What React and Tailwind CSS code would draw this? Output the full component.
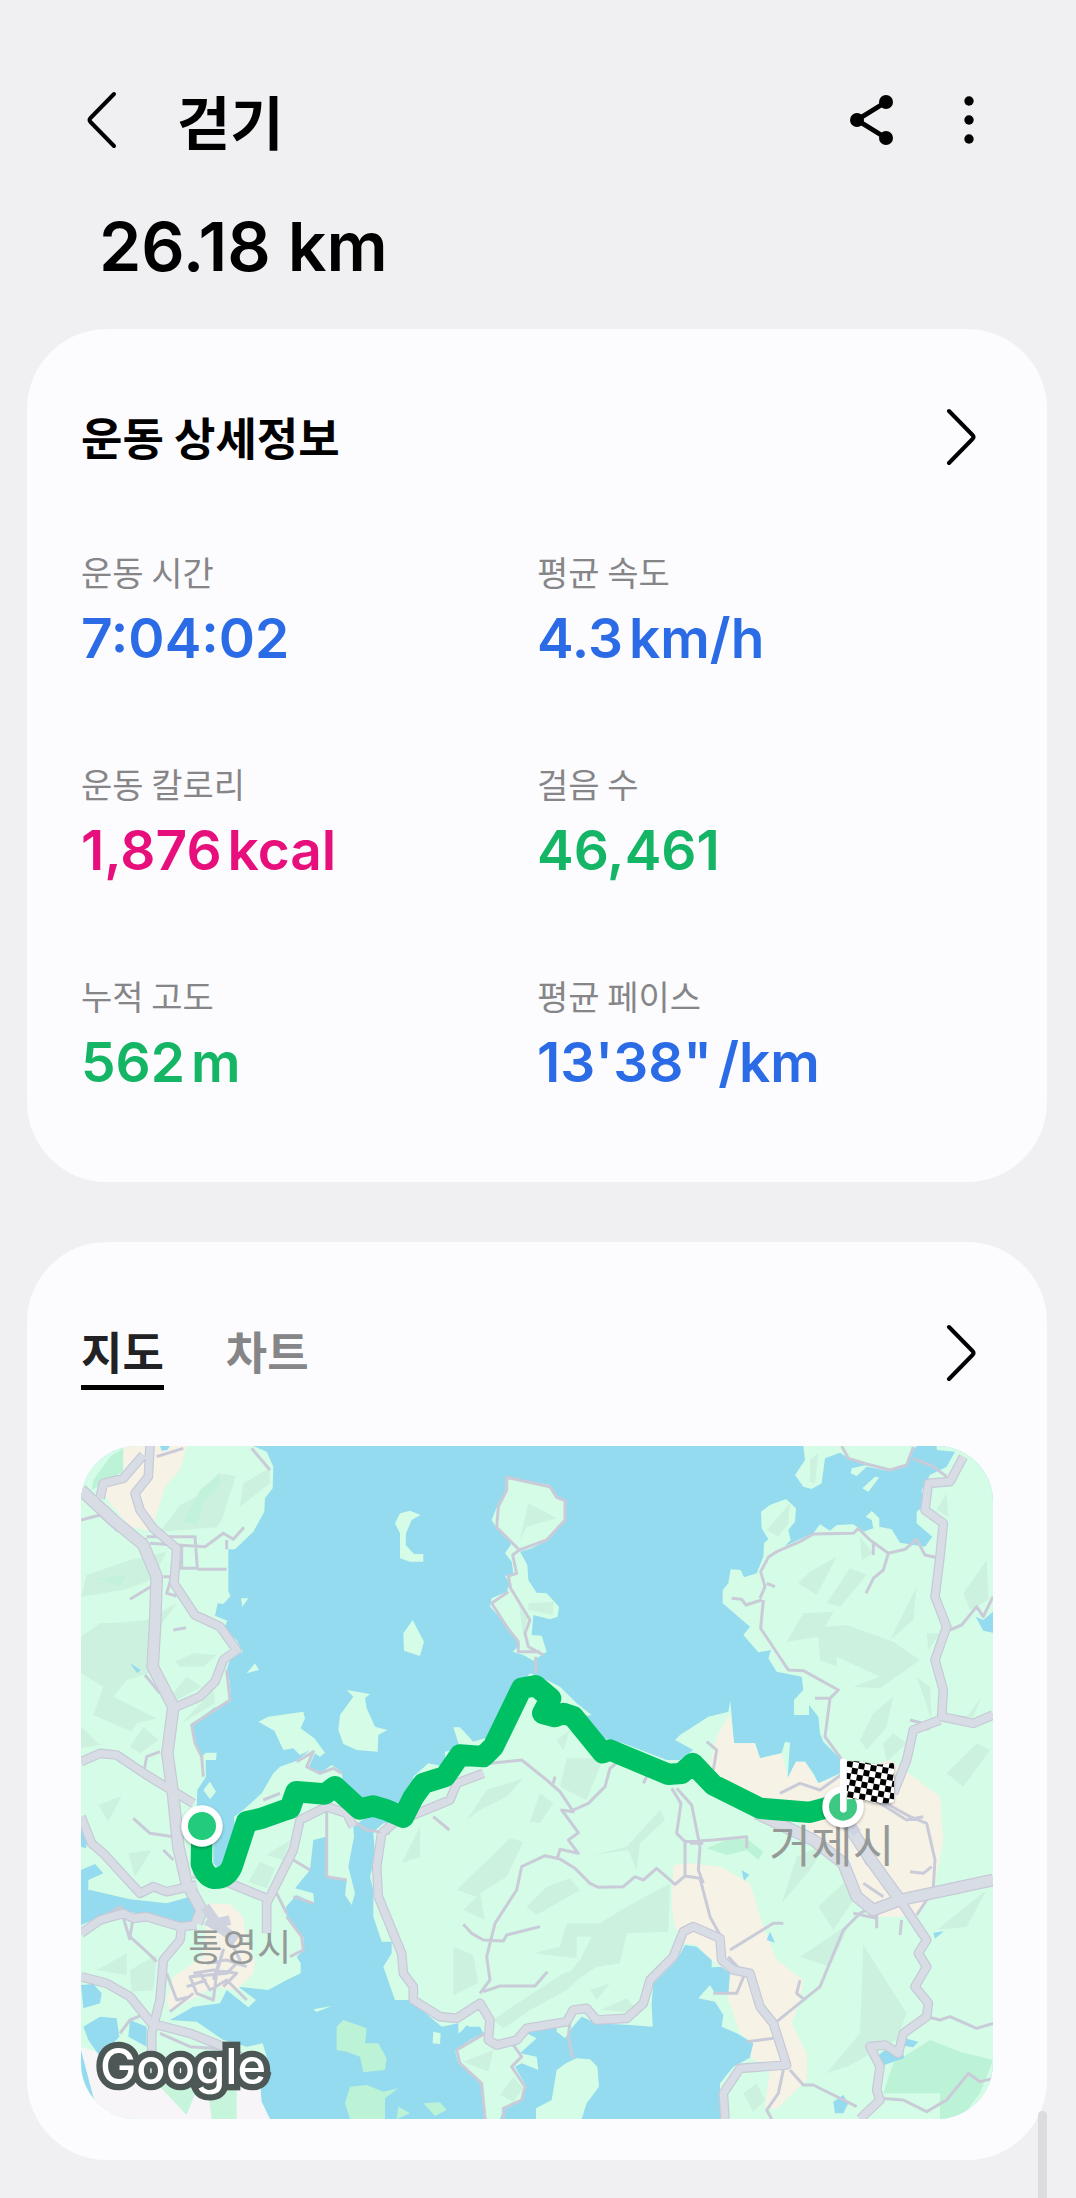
// src/App.jsx
import React, { useState } from 'react';

const STATS = [
    { label: '운동 시간', value: '7:04:02', color: 'text-[#2b6be6]' },
    { label: '평균 속도', value: '4.3', unit: 'km/h', color: 'text-[#2b6be6]' },
    { label: '운동 칼로리', value: '1,876', unit: 'kcal', color: 'text-[#e60f7c]' },
    { label: '걸음 수', value: '46,461', color: 'text-[#15b566]' },
    { label: '누적 고도', value: '562', unit: 'm', color: 'text-[#15b566]' },
    { label: '평균 페이스', value: '13\'38"', unit: '/km', color: 'text-[#2b6be6]' },
];

// Map geometry, three units to a pixel at full width
const LAND = [
    // west mainland
    'M3 18H520L560 35 580 80 578 145 555 175 553 215 520 275 465 328H445V455L452 468 430 492 413 490 405 527 442 542 430 570 470 600 488 635 450 660 440 690 450 730 452 785 400 805 335 855 345 910 365 950 377 938H410L408 960H377L378 1010 352 1050 350 1110 400 1150V1270L415 1285 440 1260 465 1170 462 1130 490 1110 545 1060 580 1000 600 980 650 962 690 930 705 940 685 985 720 1000 755 975 785 995 790 1040 830 1100 860 1130 820 1160 822 1190 805 1280 825 1360 815 1395 795 1365 800 1320 740 1310 738 1190 700 1200 690 1290 645 1345 700 1360 702 1390 650 1365 618 1400 620 1430 670 1490 672 1530 650 1550 662 1570V1600L620 1620 565 1650 475 1640 528 1680 505 1702 440 1650 420 1690 340 1700 270 1740 350 1745 430 1800 500 1820 548 1810 560 1850 540 1930 545 2037H3Z',
    // Geoje island, peninsulas and east coast
    'M1045 970L1095 980 1095 935 1140 925 1120 862 1140 862 1180 905 1230 890 1300 760 1350 700 1400 720 1440 740 1490 790 1535 825 1500 830 1570 895 1630 910 1760 960 1800 960 1840 930 1785 900 1800 885 1885 830 1945 815 1951 782 1962 910H2025L2040 955 2105 940 2115 905 2130 908 2123 1015 2148 965 2175 965 2200 1000 2215 1030 2280 1000 2290 965 2230 905 2220 880 2215 830 2187 795V825H2142V780L2170 750 2165 710 2090 695 2065 655 2073 630 2035 637 1990 585 2010 560 1928 490V450L1945 430 1952 388 1982 390 1992 412 2030 400 2050 350 2052 310 2065 298 2045 265 2043 215 2070 195 2118 177 2148 205 2145 245 2125 270 2132 300 2115 318 2200 280 2220 253 2250 272 2270 255 2320 253 2350 275 2380 265 2375 240 2357 230 2375 213 2398 235V260L2435 268 2460 308 2535 320 2557 290 2510 250V215L2530 200 2525 150 2550 105 2600 80 2625 35 2570 30V18H2739V2037H1920V1930L1960 1880 2015 1850 2020 1810 1970 1780 1925 1760 1930 1725 1905 1685 1855 1675 1890 1635 1905 1660 1945 1660 1952 1600 1930 1580 1895 1582V1560L1850 1520 1815 1515 1790 1560 1720 1630 1715 1690 1718 1760 1650 1755 1550 1750 1505 1730 1475 1765 1455 1795 1430 1775V1760L1370 1765 1340 1780 1370 1795 1320 1840 1370 1850 1375 1890 1325 1870 1305 1880 1337 1935 1325 1980 1270 2010 1260 2037H1220L1205 1930 1135 1870 1125 1830 1170 1800 1210 1780 1200 1760 1170 1760 1135 1780V1750L1085 1760 990 1680H945L910 1580 935 1540V1505H905L880 1430V1350L870 1310 885 1250 880 1175 910 1150 960 1150 1000 1080 1000 1010Z',
    // north headlands
    'M2170 18L2175 60 2145 105 2170 140 2195 147 2225 130 2235 55 2280 38 2305 55 2360 75 2315 85 2312 100 2330 108 2360 80 2430 94 2480 78 2500 30 2510 18Z',
    'M2347 145L2385 110 2398 112 2365 156Z',
    // islets
    'M535 845L565 830 670 815 675 835 662 865 703 895 735 938 720 950 690 930 660 945 640 925 610 930 583 872Z',
    'M800 750L870 762 855 775 860 805 885 860 922 870 895 885 893 935 830 930 790 912 775 870 780 825 820 770Z',
    'M483 475H505L487 500ZM500 700L525 670 537 690ZM370 1050L390 1025 408 1055 390 1078Z',
    'M945 250L960 220 990 212 1022 225 995 240 978 280 977 315 1002 342H1030V365H990L960 355V280Z',
    'M970 580L998 540 1032 605 1020 648 972 632Z',
    'M1280 112L1410 135 1430 170 1455 178V240L1405 300 1355 325 1320 335 1342 375 1345 420 1370 458 1400 460 1437 500 1433 530 1410 538 1360 525 1355 585 1385 587 1400 635 1360 662 1330 645 1298 635 1313 620 1310 600 1275 550 1230 500 1235 475 1280 455 1290 430 1275 408 1300 400 1295 365 1275 340 1295 310 1250 265 1235 240 1255 190 1275 160Z',
    'M1490 1855L1530 1858 1552 1880 1557 1940 1520 1990 1505 2037H1368V2005L1415 1980 1430 1890 1460 1868Z',
    'M1060 1775L1082 1780 1080 1812 1058 1810Z',
    'M700 1708L755 1698 710 1716Z',
];

const GROVES = [
    'M770 1760L790 1740 860 1765 855 1810 895 1810 920 1855 915 1890 850 1897 840 1850 800 1835 770 1830Z',
    'M810 1940L860 1935 910 1955 955 1945 915 1975V2037H810L795 1990Z',
    'M1030 1990L1080 1987 1100 2010 1065 2028ZM955 2000L990 2020 950 2037Z',
    'M35 150L40 120 90 50 130 25V95L70 130Z',
    'M2410 1960L2440 1870 2550 1800 2640 1835 2739 1860 2700 1960 2640 2037H2580V1960Z',
    'M1880 1225L1950 1195 2005 1200 2050 1235 2035 1260 2000 1230 1940 1245Z',
    'M370 1930L470 1960 465 2037H395Z',
];

const HILLS = [
    'M240 275L300 195 350 170 415 100 468 108 425 240 410 262Z',
    'M490 130L568 85 570 130 480 200Z',
    'M3 470L20 405 150 360 260 335 215 420 130 450Z',
    'M3 590L60 550 110 548 200 540 290 490 250 545 210 600 205 700 140 720 100 770 230 835 170 850 155 875 40 825 70 740 3 700Z',
    'M285 665L340 640 410 645 370 680 300 680ZM280 760L320 710 365 740 290 780ZM305 850L400 750 405 790Z',
    'M150 920L190 860 235 900 180 940ZM3 860L60 915 3 925Z',
    'M55 1095L125 1068 85 1145ZM145 1240L215 1230 165 1310ZM560 1245L630 1200 610 1260Z',
    'M540 1265L585 1285 560 1345 505 1325ZM50 1590L140 1540V1605ZM150 1590L230 1545 220 1650 155 1655Z',
    'M1345 190L1430 235 1340 260 1320 300ZM1345 490L1420 485V525L1345 510ZM1315 480L1345 520 1330 590Z',
    'M1430 900L1470 870 1450 930ZM1460 955H1570L1520 1080 1440 1040Z',
    'M1160 1140L1220 1050 1330 1015 1280 1070 1200 1110ZM1380 1060L1420 1090 1380 1150 1350 1145Z',
    'M965 1270L1020 1160V1250ZM1130 1350L1290 1195 1330 1205 1280 1310 1200 1360 1215 1440 1150 1410 1190 1370Z',
    'M1120 1520L1180 1545 1195 1630 1120 1665ZM1340 1400L1400 1340 1470 1315 1500 1350 1370 1425Z',
    'M1540 1245L1640 1220 1740 1110 1755 1140 1680 1210 1670 1290 1645 1230Z',
    'M1360 1540L1440 1520 1460 1450 1560 1450 1640 1400 1770 1330 1765 1475 1640 1480 1620 1570 1550 1580 1400 1680 1500 1560 1535 1490 1490 1490 1490 1555Z',
    'M1240 1740L1290 1705 1450 1600 1540 1575 1460 1650 1350 1710 1270 1765ZM1530 1650L1590 1630 1550 1680ZM1560 1710L1640 1675 1680 1720Z',
    'M1150 1865L1240 1830 1225 1895ZM1260 1965L1300 1910 1330 1945 1300 1985Z',
    'M2120 605L2170 520 2260 515 2235 560 2300 555 2440 605 2520 660 2400 745 2320 740 2400 710 2270 650V680L2220 660 2215 590Z',
    'M2155 430L2190 395 2270 350 2210 465ZM2240 490L2310 385 2360 405 2280 500ZM2430 600L2510 440 2500 540Z',
    'M2340 290L2380 340 2345 360ZM2190 60L2215 40 2205 130 2190 125ZM2060 270L2130 190 2125 250 2095 290Z',
    'M2340 900L2380 820 2440 770 2420 860 2360 930ZM2410 910L2440 880 2480 910 2420 965ZM2510 710L2550 740 2555 840Z',
    'M2650 460L2720 360 2725 480 2670 510ZM2570 210L2600 160 2605 230ZM2540 580L2580 580 2545 630Z',
    'M2600 1000L2690 910 2730 930 2650 1040ZM2660 830L2705 770 2680 830Z',
    'M2350 1515L2480 1720 2450 1800 2300 1880 2240 1900 2340 1780Z',
    'M2160 1550L2310 1450 2250 1580ZM2105 1390L2150 1250 2240 1210 2190 1290ZM2215 1400L2300 1320 2320 1380 2260 1470Z',
    'M2570 1470L2720 1350 2660 1460ZM1990 1960L2030 1930 2055 1980 2020 2015Z',
];

const TOWNS = [
    'M130 18H320L300 90 255 140 225 240 222 275 150 260 90 190 70 150 130 100Z',
    'M385 1390L450 1393 490 1430 500 1500 525 1560 520 1600 470 1650 400 1640 270 1715 260 1680 280 1610 370 1550Z',
    'M1780 1275L1830 1270 1920 1280 2010 1330 2050 1460 2090 1560 2170 1620 2160 1680 2135 1750 2180 1840V1920L2090 2008 2055 2000 2070 1890 2010 1850 2020 1810 1980 1780 1945 1680 1950 1600 1895 1560 1850 1515 1810 1510 1785 1460 1775 1400Z',
    'M1910 890L1950 820 1962 910H2025L2040 955 2105 940 2123 1015 2148 965 2175 965 2215 1030 2290 1000 2430 960 2500 1010 2580 1070 2590 1200 2560 1360 2510 1430 2370 1430 2330 1370 2270 1240 2150 1140 1960 1090 1880 1010Z',
];

const WATERS = [
    'M3 1360L30 1350 150 1378 260 1390 330 1370 355 1400 350 1445 280 1455 190 1425 130 1410 60 1430 3 1455Z',
    'M3 1170L22 1200 18 1225 3 1220ZM3 1290L45 1272 70 1300 25 1320 25 1360H3Z',
    'M3 1635L40 1632 65 1660 60 1690 10 1705ZM10 1760L60 1730 110 1735 118 1790 100 1810 60 1850 25 1800ZM150 1740L200 1760V1820L145 1790Z',
    'M3 1830L45 1990 3 1950ZM240 18H270L262 30 245 32ZM150 670L182 690 172 700Z',
    'M2687 530L2710 540 2739 515V578L2710 572ZM1985 1290L2008 1305 1992 1322ZM2070 1475L2085 1508 2060 1500ZM2560 1478L2592 1474 2565 1496Z',
    'M2390 1850L2415 1830 2470 1838 2472 1855 2405 1878ZM2475 1795L2515 1805 2500 1822 2475 1818ZM2260 1985L2290 1965 2305 1990 2290 2020 2265 2020Z',
    'M1140 1780L1160 1755 1190 1775 1150 1808Z',
];

const HIGHWAYS = [
    'M3 150L100 240 190 315 230 410 225 560 218 680 280 800 262 940 280 1070 295 1220 320 1330 365 1410 350 1450',
    'M2030 1120L2200 1200 2290 1270 2330 1370 2380 1410 2460 1380 2739 1320',
    'M2300 1150L2380 1270 2460 1380',
];

const MAJOR_ROADS = [
    'M210 18L205 110 165 160 180 210 220 265 290 325 282 430 345 525 420 560 470 630 430 660 405 725 360 770 290 800',
    'M3 965L60 940 110 945 200 1005 340 1090',
    'M3 1130L35 1210 70 1240 180 1360 220 1340 260 1355 350 1335',
    'M3 1480L60 1440 130 1420 160 1435 200 1430 300 1460 350 1455',
    'M305 1460L300 1500 250 1560 240 1680 215 1780 215 1850',
    'M3 1610L80 1630 150 1670 215 1750 330 1780 430 1820 480 1850',
    'M340 1300L450 1330 560 1375',
    'M560 1480V1390L640 1230 660 1140 740 1100 800 1120 820 1160M905 1180L890 1280 895 1370 940 1480 965 1540 970 1600 1000 1640 1000 1680 1080 1730 1130 1735 1200 1690 1230 1740 1225 1800 1250 1815 1310 1800 1340 1765 1460 1745 1480 1710 1520 1705 1550 1740 1640 1735 1690 1690 1710 1620 1780 1550 1810 1475 1840 1460 1920 1495 1925 1560 1960 1590 2010 1600 2040 1700 2080 1750 2120 1875 1980 1885 1930 1960 1935 2037',
    'M905 1180L940 1150 1110 1080 1130 1030 1210 1000',
    'M2650 50L2610 125 2545 130 2535 210 2590 250 2580 350 2565 470 2600 560 2565 660 2590 750 2585 830 2680 850 2739 825M2580 840L2500 870 2480 960 2440 1060',
    'M2460 1380L2540 1500 2515 1540 2540 1580 2505 1640 2545 1690 2540 1730 2470 1780 2455 1840 2415 1815 2370 1820 2400 1880 2390 1950 2400 1980 2340 2037',
    'M60 175L70 130 130 115 190 45',
];

const MINOR_ROADS = [
    'M200 290H345L352 385H300M210 310L375 320 430 280 460 298 492 262M440 300V328M352 388H440M305 320V385M150 478L212 440',
    'M3 240L60 225 110 270 200 300M250 410H275L260 460 290 468M280 570L318 563M195 705L240 760M230 50L310 25M515 25L570 90',
    'M190 1005L200 950 240 935M440 690L450 780 335 855 345 910 365 950 370 1010M160 1135L210 1180 290 1192M250 1230L280 1260',
    'M160 1430L150 1490 205 1540 230 1565M40 1450L120 1400 150 1500M120 1780L150 1740 200 1720M240 1780L330 1820 480 1830M260 1600L290 1680 330 1670',
    'M640 1260L690 1290M640 1370L700 1390M620 1430L665 1490 670 1530 630 1550M590 1360L620 1420M550 1080L600 1060M740 1110V1310L800 1320M800 1130L860 1170 930 1180',
    'M650 965L700 935 680 980 720 1000 760 985 785 1000',
    'M1280 112L1410 140 1430 172 1455 182V240L1400 300 1318 330 1250 262 1255 200 1280 150ZM1318 330L1298 345 1310 400 1285 408 1292 445 1350 540 1335 580 1345 620 1390 645M1285 455L1235 490 1280 560 1315 605V635H1380M1367 650V700',
    'M1230 970L1325 960 1400 1020 1440 1055 1480 1115 1445 1110 1495 1178 1465 1200 1495 1240 1440 1228 1432 1255M1480 1110L1525 1090 1575 1040 1590 985 1620 960',
    'M1200 1660L1230 1620 1220 1550 1245 1450 1310 1350 1325 1280 1395 1247 1440 1257 1485 1285 1530 1330 1555 1342 1630 1340 1665 1310 1690 1320 1730 1285 1785 1333 1815 1308 1860 1315 1890 1430 1920 1485',
    'M1150 1453L1175 1480 1210 1500 1270 1503 1280 1485 1380 1460M1210 1655L1260 1638 1365 1638 1402 1595M1060 1130L1108 1170M1420 1030L1425 1010M1700 1010L1690 1030',
    'M1775 1045L1803 1090 1790 1180 1815 1205 1900 1200 2000 1190V1225M1790 1045L1835 1095 1860 1220 1855 1290 1870 1330M1815 1200V1308M1830 1210H1870',
    'M1215 1780L1130 1830 1140 1870 1205 1930 1215 2037M1300 1815L1325 1850 1295 1880 1335 1940 1325 1980 1270 2005V2037M1470 1745L1465 1790 1478 1855',
    'M1955 475L1985 478 1998 495 2045 480M2040 475L2055 440 2042 395 2065 352 2090 335 2160 305 2200 282 2320 280 2335 265 2370 300 2425 340 2475 328 2510 298 2535 345 2580 355M2425 340L2410 390 2380 415 2358 460M2380 310V345M2060 430L2085 440',
    'M2050 480L2042 565 2125 690 2170 692 2275 750 2250 775 2205 775M2250 775L2235 890 2290 965M2285 18L2305 55 2360 72 2430 90 2480 75 2500 20M2500 55L2560 80 2600 110',
    'M2610 570L2645 555 2690 500 2710 530 2739 470M2490 840L2530 850M2590 830L2660 835M2540 870L2560 850',
    'M1880 905L1910 930 1900 990M2100 1060L2160 1030 2220 1050 2290 1000 2400 1090 2480 1140 2530 1130M2400 1080L2490 1130 2540 1150 2565 1260 2560 1340M2490 1295L2530 1300 2555 1280M2350 1330L2410 1370M2310 1180L2360 1270 2430 1330',
    'M1950 1530L2080 1450H2110M1945 1550L1990 1600M2090 1745L2220 1640 2290 1470 2340 1420 2390 1395M2390 1410V1465M2320 1420L2390 1435M2465 1440L2460 1485M2510 1425L2560 1350',
    'M2160 1620L2150 1660 2175 1680M1900 1660H1970L1995 1600M2000 1805L2080 1795M2110 1890L2095 1960 2060 2010 2075 2037M2130 1890L2170 1935 2200 1935 2330 2000M2400 1975L2470 1980 2540 2015 2600 1980 2665 1900 2700 1925 2739 1915',
    'M2540 1730L2580 1740 2610 1730 2690 1765 2739 1750M440 1480L480 1560 440 1600 330 1610 350 1660 400 1680 410 1600 430 1530 400 1620M360 1600L390 1650 440 1620 500 1680M270 1715L340 1660',
    'M340 1600L400 1590 470 1600 430 1640M320 1640L380 1620M380 1570L440 1560 500 1580',
];

const ROUTE =
    'M366 1158L364 1272Q378 1312 402 1315 440 1316 456 1280L500 1145 545 1135 600 1115 630 1105 648 1055 735 1062 765 1040 838 1107 880 1098 920 1110 970 1132 1000 1072 1030 1030 1095 1010 1140 945 1210 950 1240 920 1325 745 1367 737 1412 775 1388 820 1425 830 1450 820 1480 830 1568 938 1590 930 1765 1003 1805 1000 1838 970 1900 1035 2040 1105 2190 1117 2289 1090';

const Chevron = ({ left }) => (
    <svg viewBox="0 0 32 60" className="h-[60px] w-8" fill="none" stroke="currentColor" strokeWidth="4" strokeLinecap="round" strokeLinejoin="round" aria-hidden="true">
        <path d={left ? 'M29 4L5.500 28Q3.500 30 5.500 32L29 56' : 'M4 4L27.500 28Q29.500 30 27.500 32L4 56'} />
    </svg>
);

const Stat = ({ label, value, unit, color }) => (
    <div>
        <dt className="text-[34px] leading-[48px] text-[#868688]">{label}</dt>
        <dd className={`mt-2 flex gap-1.5 font-['Inter',sans-serif] text-[55px] font-semibold leading-[68px] ${color}`}>
            <span>{value}</span>
            {unit && <span>{unit}</span>}
        </dd>
    </div>
);

const RouteMap = () => (
    <svg viewBox="3 18 2736 2019" className="block w-full rounded-[56px] bg-[#94dbef]" role="img" aria-label="운동 경로 지도">
        <defs>
            <pattern id="checks" width="36" height="36" patternUnits="userSpaceOnUse" patternTransform="translate(2302 962) rotate(10)">
                <rect width="36" height="36" fill="#fff" />
                <path d="M0 0H18V36H36V18H0Z" fill="#000" />
            </pattern>
            <filter id="pin-shadow" x="-30%" y="-30%" width="160%" height="160%">
                <feDropShadow dx="0" dy="4" stdDeviation="5" floodOpacity="0.35" />
            </filter>
        </defs>
        <path d={LAND.join('')} fill="#d4fce6" />
        <path d={HILLS.join('')} fill="#ccf2df" />
        <path d={GROVES.join('')} fill="#bcf2d5" />
        <path d="M310 245L360 150 415 105 425 130 375 180 350 255ZM50 415L140 405 120 440Z" fill="#c2f3da" />
        <path d={TOWNS.join('')} fill="#f7f2e6" />
        <path d="M3 1820L60 1840 180 1900 330 1850 440 1900 540 1930 545 1985 570 2037H3Z" fill="#f8f5f9" />
        <path d="M230 1930L370 1900 320 2025ZM380 1920L470 1950V2037H395Z" fill="#c6f5dc" />
        <path d={WATERS.join('')} fill="#94dbef" />
        <g fill="none" strokeLinejoin="round">
            <path d={MINOR_ROADS.join('')} stroke="#c9ccd8" strokeWidth="9" />
            <path d={MAJOR_ROADS.join('')} stroke="#c6c9d7" strokeWidth="29" />
            <path d={HIGHWAYS.join('')} stroke="#c6c9d7" strokeWidth="38" />
            <path d={MAJOR_ROADS.join('')} stroke="#d8dce4" strokeWidth="22" />
            <path d={HIGHWAYS.join('')} stroke="#d8dce4" strokeWidth="31" />
            <path d="M375 1400L410 1450 450 1440M380 1440L430 1470 470 1500M2300 1140L2330 1180" stroke="#cfd3df" strokeWidth="30" />
            <path d={ROUTE} stroke="#00c064" strokeWidth="64" strokeLinecap="round" />
        </g>
        <g fill="#959a98" className="font-['Noto_Sans_CJK_KR',sans-serif]">
            <text x="325" y="1563" fontSize="112">통영시</text>
            <text x="2068" y="1268" fontSize="136">거제시</text>
        </g>
        <g filter="url(#pin-shadow)">
            <circle cx="366" cy="1158" r="52" fill="#22cc7c" stroke="#fff" strokeWidth="20" />
            <circle cx="2289" cy="1100" r="52" fill="#3cc983" stroke="#fff" strokeWidth="20" />
            <path d="M2300 964Q2340 961 2375 972 2415 976 2436 969 2442 968 2442 976V1078Q2442 1090 2428 1088 2400 1094 2365 1082 2330 1074 2300 1078Z" fill="url(#checks)" />
        </g>
        <path d="M2290 965V1108" stroke="#fff" strokeWidth="20" strokeLinecap="round" />
        <text x="60" y="1931" fontSize="146" fill="#fff" stroke="#4d5856" strokeWidth="38" paintOrder="stroke" className="font-['Inter',sans-serif] font-medium">Google</text>
    </svg>
);

const App = () => {
    const [tab, setTab] = useState('map');
    const tabClass = (name) =>
        `border-b-[5px] text-[45px] font-bold leading-[69px] ${tab === name ? 'border-black text-[#222224]' : 'border-transparent text-[#868688]'}`;

    return (
        <div className="min-h-screen bg-[#f0f0f2] pb-[38px] pl-[27px] pr-[29px] pt-20 font-['Noto_Sans_CJK_KR',sans-serif] text-black">
            <header className="flex h-20 items-center pl-[58px] pr-[60px]">
                <button type="button" aria-label="뒤로">
                    <Chevron left />
                </button>
                <h1 className="ml-[60px] flex-1 text-[58px] font-bold leading-[76px]">걷기</h1>
                <button type="button" aria-label="공유">
                    <svg viewBox="0 0 48 56" className="h-14 w-12" fill="currentColor" aria-hidden="true">
                        <path d="M39 10L10 28L39 46" fill="none" stroke="currentColor" strokeWidth="5" />
                        <circle cx="10" cy="28" r="7" />
                        <circle cx="39" cy="10" r="7" />
                        <circle cx="39" cy="46" r="7" />
                    </svg>
                </button>
                <button type="button" aria-label="더보기" className="ml-[60px]">
                    <svg viewBox="0 0 32 56" className="h-14 w-8" fill="currentColor" aria-hidden="true">
                        <circle cx="14" cy="9" r="4.700" />
                        <circle cx="14" cy="28" r="4.700" />
                        <circle cx="14" cy="47" r="4.700" />
                    </svg>
                </button>
            </header>

            <p className="mt-[46px] pl-[72px] font-['Inter',sans-serif] text-[68px] font-semibold leading-20">26.18 km</p>

            <main className="mt-[43px] flex flex-col gap-[60px]">
                <section className="rounded-[80px] bg-[#fcfcfe] px-[54px] pb-[86px] pt-[74px]">
                    <div className="flex items-center justify-between pr-4">
                        <h2 className="text-[45px] font-bold leading-[68px]">운동 상세정보</h2>
                        <button type="button" aria-label="운동 상세정보 보기">
                            <Chevron />
                        </button>
                    </div>
                    <dl className="mt-[77px] grid grid-cols-2 gap-y-[88px]">
                        {STATS.map((stat) => (
                            <Stat key={stat.label} {...stat} />
                        ))}
                    </dl>
                </section>

                <section className="rounded-[80px] bg-[#fcfcfe] px-[54px] pb-[41px] pt-[74px]">
                    <div className="flex items-center justify-between pr-4">
                        <div className="flex gap-[62px]" role="tablist">
                            <button type="button" role="tab" aria-selected={tab === 'map'} className={tabClass('map')} onClick={() => setTab('map')}>
                                지도
                            </button>
                            <button type="button" role="tab" aria-selected={tab === 'chart'} className={tabClass('chart')} onClick={() => setTab('chart')}>
                                차트
                            </button>
                        </div>
                        <button type="button" aria-label="지도 크게 보기">
                            <Chevron />
                        </button>
                    </div>
                    <div className="mt-14">
                        <RouteMap />
                    </div>
                </section>
            </main>

            {/* scroll thumb */}
            <div className="fixed bottom-0 right-[29px] h-[87px] w-[9px] rounded-t-full bg-[#dcdcde]" />
        </div>
    );
};

export default App;
